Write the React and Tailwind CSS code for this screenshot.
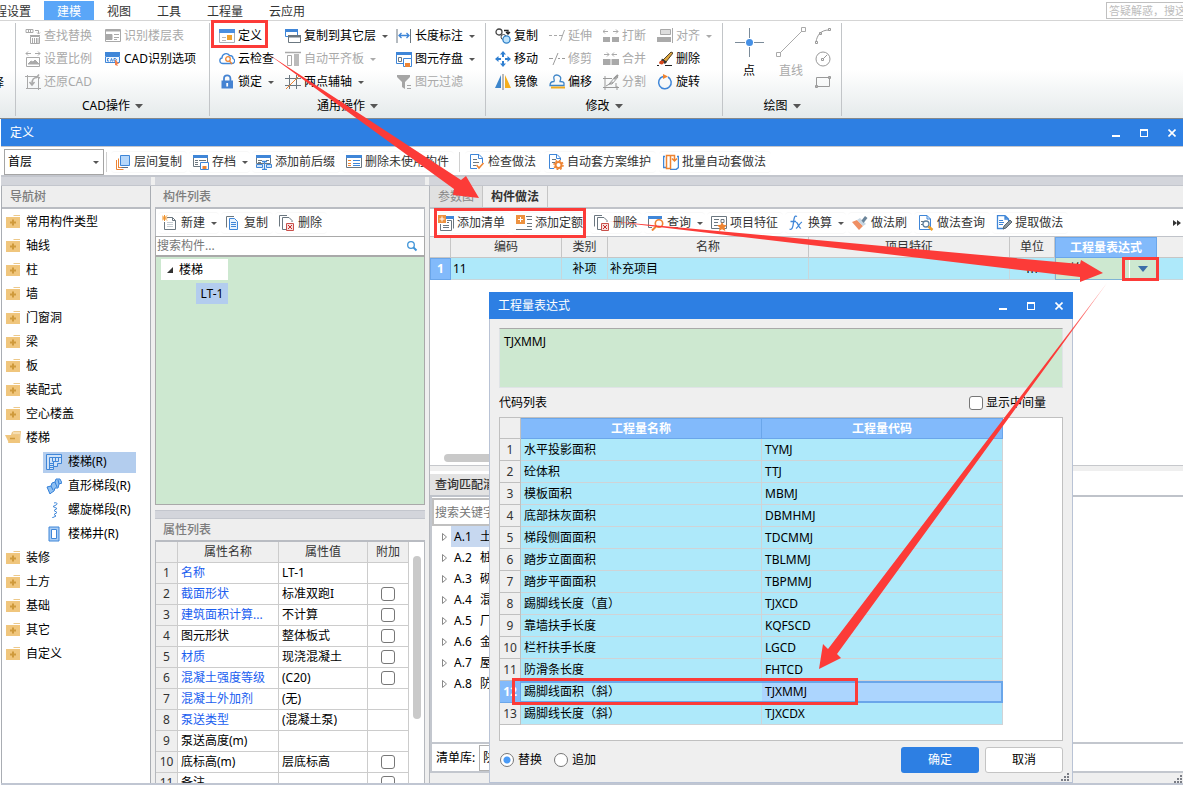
import React from "react";

const G = "#a9a9a9";
const B = "#3f86d8";
const D = "#6b7780";
const O = "#ee8432";

const drawings = {
  findReplace: (
    <g fill="none" stroke={G}>
      <path d="M1 1.5h7v3H1zM3.500 1.500v3M5.500 1.500v3M10 2.500h3.500v3M12 4.500l1.500 1.500 1.500-1.500" />
      <path d="M5.500 8.500h9v7h-9zM5 7.500h10M7.500 10v5M9.500 10v5M11.500 10v5M13 10v5" />
    </g>
  ),
  scale: (
    <g fill="none" stroke={G}>
      <path d="M1 2.500h5M3 .5l-2 2 2 2M10 2.500h5M13 .5l2 2-2 2M1.500 6.500h13v9h-13z" />
      <path d="M3 13l3-3 2 1 2-2 4 4z" fill={G} />
    </g>
  ),
  restore: (
    <g fill="none" stroke={G}>
      <path d="M2.500 1v14M0 2.500h12M13.500 4v12M1 14.500h15" />
      <path d="M12 3.500c-4 0-5 2-5 6M4.500 8l2.500 3 2.500-3M14 .5l-2 2.500 3 1" strokeWidth="1.500" />
    </g>
  ),
  floorTable: (
    <g fill="none" stroke={G}>
      <path d="M.5 1.500h15v12H.5z" />
      <path d="M1 2.500h14" strokeWidth="2" />
      <path d="M0 6.500h7v5H0z" fill={G} />
      <path d="M9 6.500h5M9 9.500h5M9 11.500h3" />
    </g>
  ),
  cadOption: (
    <g>
      <path d="M0 1h15v4H0z" fill={B} />
      <path d="M.5 5.500h14v6H.5z" fill="#edf5fe" stroke={B} />
      <path d="M4 7.500H2.500v2.500H4M5.500 10.500l1-3 1 3M9 7.500v2.500h1.500l1-1.500-1-1z" fill="none" stroke={B} />
      <path d="M10 8l4 5-2 0 1 2-3-1z" fill="#ef7f4d" />
    </g>
  ),
  define: (
    <g>
      <path d="M.5 4.500h15v10H.5z" fill="#fff" stroke="#a8b0b8" />
      <path d="M0 1h16v4H0z" fill="#4a8fe0" />
      <path d="M8 7h5v5H8z" fill="#f0a22c" />
      <path d="M3 9.500h4M3 12.500h4" stroke="#b9b9b9" />
    </g>
  ),
  cloud: (
    <g fill="none" strokeWidth="1.300">
      <path d="M4 12.500c-4 0-4-5-1-5.500 0-4 5-6 7.500-2.500 3 0 3.500 1.500 3.500 3 3 1.500 1.500 5-1 5z" stroke={B} />
      <circle cx="9" cy="8" r="2.300" stroke={O} />
      <path d="M10.500 10l2.500 3" stroke={O} />
    </g>
  ),
  lock: (
    <g>
      <path d="M5 7V4.500a3.200 3.200 0 016.400 0V7" fill="none" stroke="#4583d2" strokeWidth="1.800" />
      <path d="M2.500 6.500H14v8H2.500z" fill="#4583d2" />
      <path d="M8.200 9v3.500" stroke="#fff" strokeWidth="1.800" />
    </g>
  ),
  copyLayer: (
    <g>
      <path d="M.5 1.500h12v7H.5z" fill="#fff" stroke={B} />
      <path d="M0 1h13v3H0z" fill={B} />
      <path d="M3.500 7.500h12v7h-12z" fill="#fff" stroke={D} />
      <path d="M3 7h13v2.500H3z" fill={D} />
    </g>
  ),
  alignSlab: (
    <g>
      <path d="M0 1.500h16" stroke={G} strokeWidth="1.500" />
      <path d="M2.500 4.500h4v10h-4z" fill="none" stroke={G} />
      <path d="M9 3h5v12H9z" fill="#bbb" />
    </g>
  ),
  axis: (
    <g fill="none">
      <path d="M4.500 1v14M11.500 1v14M0 4.500h16M0 11.500h16" stroke={D} />
      <path d="M1 15L15 1" stroke={O} />
    </g>
  ),
  dimension: (
    <g fill="none">
      <path d="M1 1v14M14.500 1v14" stroke={D} />
      <path d="M3 7.500h10M5.500 5L3 7.500 5.500 10M10.500 5L13 7.500 10.500 10" stroke={B} strokeWidth="1.300" />
    </g>
  ),
  saveElement: (
    <g>
      <path d="M.5 1.500h15v11H.5z" fill="#fff" stroke={B} />
      <path d="M0 1h16v3H0z" fill={B} />
      <path d="M2.500 6.500h3v4h-3z" fill="none" stroke={D} />
      <path d="M7.500 7.500h8v8h-8z" fill="#fff" stroke={B} />
      <path d="M9 12h5v4H9z" fill={O} />
    </g>
  ),
  filter: (
    <g fill="#a5a5a5">
      <path d="M1 1h13v2L9 8v7l-3-2V8L1 3z" />
      <path d="M11 11h4v1h-4zM11 14h4v1h-4z" />
    </g>
  ),
  copyObj: (
    <g fill="none">
      <circle cx="4" cy="4" r="3" stroke="#444" strokeWidth="1.300" />
      <path d="M9 2.500h4v3M11 4l2 2 2-2" stroke="#222" strokeWidth="1.300" />
      <circle cx="8.500" cy="9" r="2.500" stroke="#444" />
      <circle cx="11.500" cy="11.500" r="3.600" fill="#bfe3fb" stroke="#2f80c8" strokeWidth="1.300" />
    </g>
  ),
  move: (
    <g fill="#2f7fd1">
      <path d="M8 0l3 3.500H9V6H7V3.500H5zM8 16l3-3.500H9V10H7v2.500H5zM0 8l3.500-3v2H6v2H3.500v2zM16 8l-3.500-3v2H10v2h2.500v2z" />
    </g>
  ),
  mirror: (
    <g>
      <path d="M6 1v13H0z" fill="#3d86cc" />
      <path d="M10 1v13h6z" fill="#f5ae1b" />
      <path d="M8 0v16" stroke="#777" />
    </g>
  ),
  extend: <path d="M0 7.500h3M5 7.500h3M10 7.500h3M11.500 13l4-11" stroke={G} fill="none" />,
  trim: <path d="M0 7.500h4M9 7.500h2M13 7.500h3M4 14l5-12" stroke="#9b9b9b" fill="none" />,
  offset: (
    <g fill="none" strokeWidth="1.300">
      <path d="M1 11.500h14V9.500c0-2-2-2-4-2 0-2 2-3 0-5s-5-2-6 0 1 3 0 5c-3 0-4 1-4 4z" stroke="#3f86c8" />
      <path d="M2 13.500h14" stroke="#f0ab20" strokeWidth="2" />
    </g>
  ),
  breakUp: (
    <g fill={G}>
      <path d="M0 9h7v5H0zM9 9h7v5H9z" />
      <path d="M0 3.500h5M2 1.500l-2 2 2 2M10 3.500h5M13 1.500l2 2-2 2" stroke={G} fill="none" />
    </g>
  ),
  merge: (
    <g fill={G}>
      <path d="M0 8h7.500v6H0zM8.500 8H16v6H8.500z" />
      <path d="M1 3.500h5M4 1.500l2 2-2 2M9 3.500h5M11 1.500l-2 2 2 2" stroke={G} fill="none" />
    </g>
  ),
  split: (
    <g fill="none" stroke="#999">
      <path d="M0 4.500h9M13 9v4M2 2v14M14 12v4M0 13.500h16M3 12l7-4" />
      <path d="M6 10l7-8 2 1-6 7z" />
      <path d="M11 5l4-4" strokeWidth="2" />
    </g>
  ),
  align: (
    <g>
      <path d="M3.500 1.500h10v5h-10z" fill="#ddd" stroke={G} />
      <path d="M0 9h14v5H0z" fill="#aaa" />
      <path d="M15.500 0v15" stroke={G} />
    </g>
  ),
  erase: (
    <g>
      <path d="M6 9l8-8 2 1-7 9z" fill="#dba63f" stroke="#53412a" />
      <path d="M5 7.500l5 3.500-2 2-4-3z" fill="#333" />
      <path d="M2 12c1-3 3-3 5-1.500 0 3-3 4-5 1.500z" fill="#d5481c" />
      <path d="M0 14.500h2M8 14.500h7" stroke="#222" />
    </g>
  ),
  rotate: (
    <g fill="none">
      <path d="M6 2.500a6.300 6.300 0 105 .5" stroke="#3f86d8" strokeWidth="1.500" />
      <path d="M6 0l5 2.500-5 2.500z" fill={O} />
    </g>
  ),
  layers: (
    <g fill="none">
      <path d="M5.500 1.500h9v10h-9z" fill="#b6d7fa" stroke={B} />
      <path d="M3.500 5v8.500H13" stroke="#5f6f86" />
      <path d="M1.500 6v9.500h7M3.500 4.500v9h3" stroke={O} />
    </g>
  ),
  archive: (
    <g>
      <path d="M.5 1.500h14v11H.5z" fill="#fff" stroke={D} />
      <path d="M0 1h15v3H0z" fill={B} />
      <path d="M2 6.500h3M6 6.500h7M2 8.500h3M2 10.500h3" stroke={D} />
      <path d="M7.500 8.500h8v7h-8z" fill="#fff" stroke={B} />
      <path d="M9.500 12h4v3h-4z" fill={O} />
    </g>
  ),
  affix: (
    <g>
      <path d="M.5 1.500h14v8H.5z" fill="#fff" stroke={D} />
      <path d="M0 1h15v3H0z" fill={B} />
      <path d="M2 6.500h4M2 8.500h3M10 6.500h3" stroke={D} />
      <path d="M.5 10.500h6v3h-6zM10.500 10.500h5v3h-5z" fill="#cfe3fa" stroke={B} />
      <path d="M6 7.500h5M8.500 7.500v7.500M6 15.500h5" stroke={B} strokeWidth="1.300" />
    </g>
  ),
  listTable: (
    <g>
      <path d="M.5 1.500h15v12H.5z" fill="#fff" stroke={D} />
      <path d="M0 1h16v3H0z" fill={B} />
      <path d="M7 6.500h7M7 9.500h7M7 11.500h7" stroke={B} />
      <path d="M2 6.500h3M2 9.500h3M2 11.500h3" stroke={O} />
    </g>
  ),
  docCheck: (
    <g fill="none">
      <path d="M10 .5H1.500v14H8M10 .5l3.500 3.500v5M9.500 1v3.500h4" stroke={B} />
      <path d="M4 5.500h4M4 8.500h6M4 11.500h3" stroke={D} />
      <path d="M7.500 11l2.500 3 4.500-5" stroke={O} strokeWidth="1.500" />
    </g>
  ),
  docGear: (
    <g fill="none">
      <path d="M9 .5H1.500v14H6M9 .5l3.500 3.500v2M8.500 1v3.500h4" stroke={B} />
      <path d="M4 5.500h4M4 8.500h3" stroke={D} />
      <circle cx="10.500" cy="11" r="3" stroke={O} strokeWidth="2" />
      <circle cx="10.500" cy="11" r="4.500" stroke={O} strokeWidth="1.500" strokeDasharray="1.800 1.700" />
    </g>
  ),
  batch: (
    <g fill="none">
      <path d="M2 2.500H.5v11H4M7 15.500h6l2.500-2v-11H14" stroke={B} strokeWidth="1.500" />
      <path d="M3.500 1.500h4v13h-4zM8 1.500h3.500V6M9 4.500l2.500 2.500L14 4.500" stroke={O} strokeWidth="1.500" />
    </g>
  ),
  newDoc: (
    <g fill="none">
      <path d="M5 2.500h5.500l3 3v9h-11V7M10.500 2.500v3h3" stroke={D} />
      <path d="M5 7.500h6M5 9.500h6M5 11.500h6" stroke="#c5ccd2" />
      <path d="M0 .5l5 5M5 .5l-5 5M2.500 0v6M0 3h5.500" stroke="#f0932b" />
    </g>
  ),
  copyDoc: (
    <g fill="none">
      <path d="M9 1.500H1.500v11" stroke={D} />
      <path d="M4.500 3.500h5l3 3v8h-8z" fill="#e9f3fe" stroke={B} />
      <path d="M6 7.500h5M6 9.500h5M6 11.500h5" stroke={B} />
    </g>
  ),
  deleteDoc: (
    <g fill="none">
      <path d="M8 .5H.5v11M7 14.500H3.500v-12H10l3 3V7" stroke={D} />
      <path d="M7.500 8.500h7v7h-7z" fill="#f6dedd" stroke="#c9504b" />
      <path d="M9 10l4 4M13 10l-4 4" stroke="#c9302c" />
    </g>
  ),
  addList: (
    <g>
      <path d="M8.500 1.500h7v12" fill="none" stroke={D} />
      <path d="M8 1h8v3H8z" fill={B} />
      <path d="M2.500 9v6.500h11v-10H9" fill="#fff" stroke={D} />
      <path d="M5 10.500h6M5 12.500h6M9 7.500h2" stroke={D} />
      <path d="M0 0h8v8H0z" fill="#ed9240" />
      <path d="M4 1.500v5M1.500 4h5" stroke="#fff" />
    </g>
  ),
  addQuota: (
    <g>
      <path d="M10 1.500h6M11 4.500h5M11 8.500h5M11 11.500h5M0 14.500h16" stroke={D} />
      <path d="M0 0h9v9H0z" fill="#ed9240" />
      <path d="M4.500 2v5M2 4.500h5" stroke="#fff" />
    </g>
  ),
  query: (
    <g fill="none">
      <path d="M4 12.500H.5v-11h13V4" stroke={D} />
      <path d="M0 1h14v3H0z" fill={B} />
      <circle cx="11" cy="8.500" r="3.700" stroke={O} strokeWidth="1.600" />
      <path d="M8.500 11L4 15.500" stroke={O} strokeWidth="2" />
    </g>
  ),
  feature: (
    <g fill="none">
      <path d="M.5 1.500h15v12H.5z" stroke={D} />
      <path d="M3 4.500h5M3 7.500h4M3 10.500h4M10 4.500h3v3h-3z" stroke={D} />
      <path d="M11 7l1.500 2.800 3.500.4-2.500 2.300.8 3.500-3.300-1.800L8 16l.600-3.500L6 10.200l3.600-.4z" fill={O} />
    </g>
  ),
  fx: (
    <g fill="none" stroke={B} strokeWidth="1.300">
      <path d="M8 1.500C5.500 0 5 3 4.500 7.500S3 15.500.5 14M1.500 6.500H7" />
      <path d="M7 7.500c2-1 2.500 6.500 5 5.500M13 7c-2.500 1-3.500 5-6 6.500" />
    </g>
  ),
  brush: (
    <g>
      <path d="M0 7l5-2 6 6-4 4z" fill="#ef8f63" />
      <path d="M5 5l3-2 6 6-3 2z" fill="#c7d6e2" />
      <path d="M9.500 5.500L13 1l2.500 2-4 5z" fill="#6b8499" />
    </g>
  ),
  docSearch: (
    <g fill="none">
      <path d="M9 .5H1.500v14H12.500V4zM9 .5V4h3.500" stroke={B} />
      <path d="M3 6.500h4M3 9.500h2" stroke={D} />
      <circle cx="8" cy="9" r="3" stroke="#5e7f9c" strokeWidth="1.300" />
      <path d="M10.500 11.500l4 3.500" stroke="#f0a22c" strokeWidth="2.500" />
    </g>
  ),
  docPen: (
    <g fill="none">
      <path d="M9 .5H1.500v13H8M9 .5l3.500 3.500v2M9 .5V4h3.500" stroke={B} strokeWidth="1.300" />
      <path d="M3 5.500h4M3 7.500h5M3 9.500h4" stroke={B} />
      <path d="M7 14l1-3 6-6 2 2-6 6z" fill="#8b979f" stroke="#596771" />
    </g>
  ),
  stair: (
    <g fill="none" stroke={B}>
      <path d="M.5.5h15v9h-4v3h-4v3h-7z" fill="#cfe2f8" />
      <path d="M3.500 3.500v12M3.500 3.500h12M6.500 3.500v4M9.500 3.500v4M12.500 3.500v4M6.500 7.500h6M3.500 9.500h4M3.500 11.500h4M3.500 13.500h4M7.500 7.500v5" />
    </g>
  ),
  straightStair: (
    <g fill="#8fc0f2" stroke="#3480d8">
      <path d="M1 9l4-1 1-3 3-1 1-3 4 0 2 4-3 1-1 4-3 0-1 3-3 2-1 1z" />
      <path d="M5 8l2 4M9 4l2 5M12 2l1 4" fill="none" />
    </g>
  ),
  spiral: (
    <path d="M8 1c3-1 4 1 2 2L7 4.500l4 2-3 2 3 2-3 2 2 1.500-4 2" fill="none" stroke={B} />
  ),
  well: (
    <g>
      <path d="M3 1h10v14H3z" fill="#a9cdf5" stroke={B} />
      <path d="M5.500 3.500h5v9h-5z" fill="#fff" stroke={B} />
    </g>
  ),
  folder: (
    <g>
      <path d="M8 2l1-1h6v1z" fill="#edc98a" />
      <path d="M1 3h14v11H1z" fill="#f0c67d" />
      <path d="M8 5.500v6M5 8.500h6" stroke="#cf9a3c" strokeWidth="2" />
    </g>
  ),
  folderOpen: (
    <g>
      <path d="M7 2l2-1h7l-1 12H3z" fill="#edc98a" />
      <path d="M0 5h13l2 8H4z" fill="#f0c67d" />
      <path d="M5 8.500h5" stroke="#cf9a3c" strokeWidth="1.500" />
      <path d="M8 3h7" stroke="#fff3d8" />
    </g>
  ),
  search: (
    <g fill="none" stroke="#3f94d8" strokeWidth="1.300">
      <circle cx="7" cy="7" r="3.300" />
      <path d="M9.500 9.500l3 3" strokeWidth="2" />
    </g>
  ),
};

function Icon({ name }) {
  return (
    <svg className="size-4 shrink-0" viewBox="0 0 16 16" aria-hidden="true">
      {drawings[name]}
    </svg>
  );
}

function Caret({ muted }) {
  return (
    <svg className="h-2 w-[9px] shrink-0" viewBox="0 0 9 8" aria-hidden="true">
      <path d="M3 3h6L6 6z" fill={muted ? "#aaa" : "#555"} />
    </svg>
  );
}

function RibbonButton({ icon, label, off, caret }) {
  return (
    <button
      type="button"
      disabled={off}
      className="flex h-[23px] items-center gap-[3px] whitespace-nowrap text-black disabled:text-[#a9a9a9]"
    >
      <Icon name={icon} />
      {label}
      {caret && <Caret muted={off} />}
    </button>
  );
}

function RibbonGroup({ title, columns, children }) {
  return (
    <section className="my-0.5 flex flex-col border-r border-[#c2c5c8] pl-[9px]">
      <div className={`grid grid-flow-col grid-rows-3 pt-px ${columns}`}>{children}</div>
      <button type="button" className="mr-2 flex flex-1 items-center justify-center gap-0.5 pt-0.5">
        {title}
        <svg className="h-2 w-3" viewBox="0 0 12 8" aria-hidden="true">
          <path d="M3 2h8L7 6.500z" fill="#555" />
        </svg>
      </button>
    </section>
  );
}

function ToolButton({ icon, label, caret }) {
  return (
    <button
      type="button"
      className={`flex h-[22px] shrink-0 items-center gap-[3px] rounded-sm border-y border-[#f8f8f8] pl-1 whitespace-nowrap text-[#333] ${caret ? "pr-0.5" : "pr-[5px]"}`}
    >
      <Icon name={icon} />
      {label}
      {caret && <Caret />}
    </button>
  );
}

function WindowButtons() {
  return (
    <div className="ml-auto flex gap-1.5">
      <button type="button" aria-label="最小化" className="flex h-7 w-[22px] items-center justify-center">
        <svg className="size-2" viewBox="0 0 8 8"><path d="M0 6h8v2H0z" fill="#fff" /></svg>
      </button>
      <button type="button" aria-label="最大化" className="flex h-7 w-[22px] items-center justify-center">
        <svg className="size-2" viewBox="0 0 8 8"><path d="M0 0h8v8H0zM1 2v5h6V2z" fill="#fff" fillRule="evenodd" /></svg>
      </button>
      <button type="button" aria-label="关闭" className="flex h-7 w-[22px] items-center justify-center">
        <svg className="size-2" viewBox="0 0 8 8"><path d="M.5.5l7 7M7.500.5l-7 7" stroke="#fff" strokeWidth="1.600" /></svg>
      </button>
    </div>
  );
}

function Grip() {
  return (
    <svg className="size-2 shrink-0" viewBox="0 0 8 8" aria-hidden="true">
      <path d="M6 0h2v2H6zM3 3h2v2H3zM6 3h2v2H6zM0 6h2v2H0zM3 6h2v2H3zM6 6h2v2H6z" fill="#7a7d85" />
    </svg>
  );
}

function PanelTitle({ children }) {
  return (
    <h2 className="flex h-[23px] shrink-0 items-center border-b-2 border-[#b9bcc2] bg-[#eeeeee] pl-2 font-medium text-[#7d7d7d]">
      {children}
    </h2>
  );
}

function CheckBox(props) {
  return (
    <input
      type="checkbox"
      className="block size-3.5 shrink-0 appearance-none rounded-[3px] border border-[#777] bg-white checked:bg-[#2d7fe3]"
      {...props}
    />
  );
}

const navBefore = ["常用构件类型", "轴线", "柱", "墙", "门窗洞", "梁", "板", "装配式", "空心楼盖"];
const navStairs = [
  ["stair", "楼梯(R)"],
  ["straightStair", "直形梯段(R)"],
  ["spiral", "螺旋梯段(R)"],
  ["well", "楼梯井(R)"],
];
const navAfter = ["装修", "土方", "基础", "其它", "自定义"];

function NavRow({ icon, label }) {
  return (
    <li>
      <button type="button" className="flex h-6 items-center gap-1 pl-[3px]">
        <Icon name={icon} />
        <span className="pl-px">{label}</span>
      </button>
    </li>
  );
}

function NavTree() {
  return (
    <aside className="flex w-[150px] shrink-0 flex-col border-x border-[#a9adb3] bg-white">
      <PanelTitle>导航树</PanelTitle>
      <ul className="min-h-0 flex-1 overflow-hidden pt-px">
        {navBefore.map((n) => <NavRow key={n} icon="folder" label={n} />)}
        <NavRow icon="folderOpen" label="楼梯" />
        {navStairs.map(([icon, label], i) => (
          <li key={label} className="flex h-6 items-center pl-[41px]">
            <button
              type="button"
              className={`flex h-[21px] w-[93px] items-center gap-1.5 pl-[3px] whitespace-nowrap ${i === 0 ? "bg-[#b3cdee]" : ""}`}
            >
              <Icon name={icon} />
              {label}
            </button>
          </li>
        ))}
        {navAfter.map((n) => <NavRow key={n} icon="folder" label={n} />)}
      </ul>
    </aside>
  );
}

const props = [
  ["名称", "LT-1", 1, 0],
  ["截面形状", "标准双跑I", 1, 1],
  ["建筑面积计算...", "不计算", 1, 1],
  ["图元形状", "整体板式", 0, 1],
  ["材质", "现浇混凝土", 1, 1],
  ["混凝土强度等级", "(C20)", 1, 1],
  ["混凝土外加剂", "(无)", 1, 0],
  ["泵送类型", "(混凝土泵)", 1, 0],
  ["泵送高度(m)", "", 0, 0],
  ["底标高(m)", "层底标高", 0, 1],
  ["备注", "", 0, 1],
];

function PropertyTable() {
  return (
    <div className="flex min-h-0 flex-1 overflow-hidden border-x border-[#b5b8bd] bg-white">
      <table className="w-[253px] table-fixed border-separate border-spacing-0 self-start">
        <colgroup>
          <col className="w-[22px]" />
          <col className="w-[101px]" />
          <col className="w-[89px]" />
          <col className="w-[41px]" />
        </colgroup>
        <thead>
          <tr className="h-[21px] bg-[#efefef] text-[#333]">
            <th className="border-r border-b border-[#ccc]" aria-label="序号" />
            <th className="border-r border-b border-[#ccc] font-normal">属性名称</th>
            <th className="border-r border-b border-[#ccc] font-normal">属性值</th>
            <th className="border-r border-b border-[#ccc] font-normal">附加</th>
          </tr>
        </thead>
        <tbody>
          {props.map(([name, value, blue, check], i) => (
            <tr key={name} className="h-[21px]">
              <td className="border-r border-b border-[#ccc] bg-[#efefef] text-center text-[#333]">{i + 1}</td>
              <td className={`truncate border-r border-b border-[#ccc] pl-[3px] ${blue ? "text-[#1a5ef0]" : "text-black"}`}>{name}</td>
              <td className="border-r border-b border-[#ccc] pl-[3px]">{value}</td>
              <td className="border-r border-b border-[#ccc]">
                <div className="flex justify-center">{check ? <CheckBox aria-label={`附加 ${name}`} /> : null}</div>
              </td>
            </tr>
          ))}
        </tbody>
      </table>
      <div className="flex-1 pt-3.5 pl-1">
        <div className="h-[163px] w-2 rounded-full bg-[#c9c9c9]" />
      </div>
    </div>
  );
}

function ComponentPanel() {
  return (
    <div className="flex w-[270px] shrink-0 flex-col">
      <PanelTitle>构件列表</PanelTitle>
      <div className="flex h-[27px] shrink-0 items-center gap-0.5 border-x border-[#b5b8bd] bg-white pl-0.5">
        <ToolButton icon="newDoc" label="新建" caret />
        <ToolButton icon="copyDoc" label="复制" />
        <ToolButton icon="deleteDoc" label="删除" />
      </div>
      <label className="flex h-[21px] shrink-0 items-center border border-b-2 border-[#a9a9a9] bg-white pr-1">
        <input aria-label="搜索构件" placeholder="搜索构件..." className="min-w-0 flex-1 pl-px outline-none placeholder:text-[#777]" />
        <Icon name="search" />
      </label>
      <div className="h-[248px] shrink-0 border border-t-0 border-[#a9a9a9] bg-[#cde8d0] pt-0.5 pl-[5px]">
        <button type="button" className="flex h-[21px] w-[67px] items-center gap-1.5 bg-white pl-1.5">
          <svg className="size-1.5" viewBox="0 0 6 6"><path d="M6 0v6H0z" fill="#333" /></svg>
          楼梯
        </button>
        <button type="button" className="mt-[3px] ml-[35px] block h-[21px] w-8 bg-[#b3cdee]">LT-1</button>
      </div>
      <div className="mt-[5px] h-[9px] shrink-0 border-y border-[#c3c6cd] bg-[#d3d5db]" />
      <PanelTitle>属性列表</PanelTitle>
      <PropertyTable />
    </div>
  );
}

function WorkTable() {
  const head = "border-r border-b border-[#c6c6c6] font-normal";
  const cell = "border-r border-b border-[#c9d6da] bg-[#aee9fa]";
  return (
    <table className="w-full shrink-0 table-fixed border-separate border-spacing-0">
      <colgroup>
        <col className="w-[21px]" />
        <col className="w-[111px]" />
        <col className="w-[46px]" />
        <col className="w-[201px]" />
        <col className="w-[201px]" />
        <col className="w-[45px]" />
        <col className="w-[102px]" />
        <col />
      </colgroup>
      <thead>
        <tr className="h-[21px] bg-[#efefef] text-[#333]">
          <th className={head} aria-label="序号" />
          <th className={head}>编码</th>
          <th className={head}>类别</th>
          <th className={head}>名称</th>
          <th className={head}>项目特征</th>
          <th className={head}>单位</th>
          <th className="border border-[#6aa6ea] bg-[#82bafb] font-bold text-white">工程量表达式</th>
          <th className="border-b border-[#c6c6c6]" aria-label="其它" />
        </tr>
      </thead>
      <tbody>
        <tr className="h-[22px]">
          <td className="border border-[#6aa6ea] bg-[#82bafb] text-center font-bold text-white">1</td>
          <td className={`${cell} pl-0.5`}>11</td>
          <td className={`${cell} text-center`}>补项</td>
          <td className={`${cell} pl-0.5`}>补充项目</td>
          <td className={cell} />
          <td className={`${cell} text-center`}>m</td>
          <td className="border-x border-b border-[#7fb3d5] bg-[#cde8d0]">
            <div className="flex items-center justify-between pl-0.5">
              原始
              <button type="button" aria-label="选择表达式" className="flex h-5 w-[27px] items-center justify-center border-l border-white">
                <svg className="h-1.5 w-2.5" viewBox="0 0 10 6"><path d="M0 0h10L5 6z" fill="#3a6ea8" /></svg>
              </button>
            </div>
          </td>
          <td className="border-b border-[#c9d6da] bg-[#aee9fa]" />
        </tr>
      </tbody>
    </table>
  );
}

const chapters = ["土", "桩", "砌", "混", "厂", "金", "屋", "防"];

function WorkPanel() {
  return (
    <div className="flex min-w-0 flex-1 flex-col border-l border-[#b5b8bd]">
      <div className="flex h-[23px] shrink-0 border-b-2 border-[#c0c3c9]">
        <button type="button" className="w-[53px] border-r border-[#c5c5c5] bg-[#e1e1e1] text-[#888]">参数图</button>
        <button type="button" className="w-[65px] border-r border-[#c5c5c5] font-bold text-[#333]">构件做法</button>
      </div>
      <div className="flex h-[27px] shrink-0 items-center gap-0.5 overflow-hidden bg-white pl-1">
        <ToolButton icon="addList" label="添加清单" />
        <ToolButton icon="addQuota" label="添加定额" />
        <ToolButton icon="deleteDoc" label="删除" />
        <ToolButton icon="query" label="查询" caret />
        <ToolButton icon="feature" label="项目特征" />
        <ToolButton icon="fx" label="换算" caret />
        <ToolButton icon="brush" label="做法刷" />
        <ToolButton icon="docSearch" label="做法查询" />
        <ToolButton icon="docPen" label="提取做法" />
        <button type="button" aria-label="更多" className="mr-0.5 ml-auto">
          <svg className="h-1.5 w-2" viewBox="0 0 8 6"><path d="M0 0l4 3-4 3zM4 0l4 3-4 3z" fill="#333" /></svg>
        </button>
      </div>
      <div className="h-px shrink-0 bg-[#c0c3c9]" />
      <div className="flex h-[229px] shrink-0 flex-col justify-between border-b border-[#c6c8cc] bg-white">
        <WorkTable />
        <div className="mb-[3px] ml-3.5 h-2 w-[420px] rounded-full bg-[#c9c9c9]" />
      </div>
      <div className="h-[5px] shrink-0" />
      <div className="flex h-[26px] shrink-0 items-end border-b-2 border-[#bfc3ca] bg-white">
        <button type="button" className="h-[21px] w-20 bg-[#e3e3e3] pl-[5px] text-left font-medium whitespace-nowrap text-[#333]">查询匹配清</button>
      </div>
      <div className="flex min-h-0 flex-1 flex-col border-l-2 border-[#c3c7ce] bg-white pt-px">
        <input
          aria-label="搜索关键字"
          placeholder="搜索关键字"
          className="h-7 w-[200px] shrink-0 border-2 border-[#c0c0c0] pl-px outline-none placeholder:text-[#777]"
        />
        <ul className="min-h-0 flex-1 overflow-hidden">
          {chapters.map((c, i) => (
            <li key={c} className="flex h-[21px] items-center pl-2.5">
              <svg className="h-2 w-1.5" viewBox="0 0 6 8"><path d="M.5.5v7l4-3.500z" fill="#fff" stroke="#888" /></svg>
              <span className={`ml-[3px] flex h-[21px] w-[150px] items-center gap-2 pl-[3px] ${i === 0 ? "bg-[#c7d8f0]" : ""}`}>
                <span className="w-[18px]">A.{i + 1}</span>
                {c}
              </span>
            </li>
          ))}
        </ul>
      </div>
      <div className="flex h-[31px] shrink-0 items-center gap-1 border-y-2 border-l-2 border-[#c3c7ce] bg-white pl-1">
        <label htmlFor="library">清单库:</label>
        <select id="library" className="h-[26px] w-[150px] appearance-none border border-[#b0b0b0] pl-[3px]">
          <option>陕</option>
        </select>
      </div>
      <div className="flex h-2.5 shrink-0 items-end justify-end pr-px">
        <Grip />
      </div>
    </div>
  );
}

const codes = [
  ["水平投影面积", "TYMJ"],
  ["砼体积", "TTJ"],
  ["模板面积", "MBMJ"],
  ["底部抹灰面积", "DBMHMJ"],
  ["梯段侧面面积", "TDCMMJ"],
  ["踏步立面面积", "TBLMMJ"],
  ["踏步平面面积", "TBPMMJ"],
  ["踢脚线长度（直）", "TJXCD"],
  ["靠墙扶手长度", "KQFSCD"],
  ["栏杆扶手长度", "LGCD"],
  ["防滑条长度", "FHTCD"],
  ["踢脚线面积（斜）", "TJXMMJ"],
  ["踢脚线长度（斜）", "TJXCDX"],
];

function ExpressionDialog() {
  const radio =
    "size-3.5 appearance-none rounded-full border border-[#777] bg-white checked:bg-[radial-gradient(circle,#4a9af5_3px,white_4px)]";
  return (
    <div role="dialog" aria-label="工程量表达式" className="absolute top-[292px] left-[489px] w-[584px] bg-[#efefef]">
      <header className="flex h-[27px] items-center bg-[#2d7fe3] pr-[3px] pl-[9px] text-white">
        <span>工程量表达式</span>
        <WindowButtons />
      </header>
      <div className="border border-t-0 border-[#b9c3d5] px-[9px] pt-[9px] pb-px">
        <textarea
          aria-label="表达式"
          defaultValue="TJXMMJ"
          className="block h-[60px] w-full resize-none border border-[#dfe3e6] border-t-[#a9a9a9] bg-[#cde8d0] px-1 py-[5px] outline-none"
        />
        <div className="flex h-[29px] items-center justify-between pr-[17px]">
          <span>代码列表</span>
          <label className="flex items-center gap-[3px]">
            <CheckBox />
            显示中间量
          </label>
        </div>
        <div className="h-[324px] border border-[#c0c0c0] bg-white">
          <table className="w-[503px] table-fixed border-separate border-spacing-0">
            <colgroup>
              <col className="w-[21px]" />
              <col className="w-[241px]" />
              <col className="w-[241px]" />
            </colgroup>
            <thead>
              <tr className="h-[21px] text-white">
                <th className="border-r border-b border-[#c0c0c0] bg-[#efefef]" aria-label="序号" />
                <th className="border-y border-r border-[#6aa6ea] bg-[#82bafb] font-bold">工程量名称</th>
                <th className="border-y border-r border-[#6aa6ea] bg-[#82bafb] font-bold">工程量代码</th>
              </tr>
            </thead>
            <tbody>
              {codes.map(([name, code], i) => {
                const sel = i === 11;
                return (
                  <tr key={code} className="h-[22px]">
                    <td className={`border-r border-b text-center ${sel ? "border-[#6aa6ea] bg-[#82bafb] font-bold text-white" : "border-[#c0c0c0] bg-[#efefef] text-[#333]"}`}>{i + 1}</td>
                    <td className={`bg-[#aee9fa] pl-[3px] ${sel ? "border-y-2 border-[#6aa6ea]" : "border-r border-b border-[#d0d3d6]"}`}>{name}</td>
                    <td className={`pl-[3px] ${sel ? "border-y-2 border-r-2 border-[#6aa6ea] bg-[#acd5fe]" : "border-r border-b border-[#d0d3d6] bg-[#aee9fa]"}`}>{code}</td>
                  </tr>
                );
              })}
            </tbody>
          </table>
        </div>
        <div className="mt-1.5 flex h-[26px] items-center gap-1.5">
          <label className="flex items-center gap-1 pl-px">
            <input type="radio" name="mode" defaultChecked className={radio} />
            替换
          </label>
          <label className="mr-auto flex items-center gap-1 pl-1.5">
            <input type="radio" name="mode" className={radio} />
            追加
          </label>
          <button type="button" className="h-[26px] w-[78px] rounded-[3px] bg-[#2d7fe3] text-white">确定</button>
          <button type="button" className="h-[26px] w-[78px] rounded-[3px] border border-[#c4c4c4] bg-white">取消</button>
        </div>
        <div className="-mr-1.5 flex h-2 items-start justify-end">
          <Grip />
        </div>
      </div>
    </div>
  );
}

function Annotations() {
  return (
    <svg className="pointer-events-none absolute top-0 left-0 h-[785px] w-[1183px]" viewBox="0 0 1183 785" aria-hidden="true">
      <defs>
        <linearGradient id="fade" gradientUnits="userSpaceOnUse" x1="1107" y1="283" x2="1060" y2="346">
          <stop offset="0" stopColor="#fc3b38" stopOpacity=".5" />
          <stop offset="1" stopColor="#fc3b38" />
        </linearGradient>
      </defs>
      <g fill="none" stroke="#fc3b38" strokeWidth="3">
        <path d="M212.500 21.500h54v25h-54zM435.500 209.500h149v27h-149zM1123.500 258.500h34v21h-34zM513.500 679.500h343v24h-343z" />
      </g>
      <g fill="#fc3b38">
        <path d="M268 54l193 126 5-4 13 22-26-3 1-6z" />
        <path d="M608 221l472 43 1-4 22 13-23 9v-5z" />
        <path d="M1107 283L837 654l4 4-22 11 4-25 5 5z" fill="url(#fade)" />
      </g>
    </svg>
  );
}

export default function App() {
  return (
    <div className="relative flex h-screen min-h-[785px] flex-col overflow-hidden bg-white font-['Noto_Sans','Noto_Sans_CJK_SC',sans-serif] text-xs text-black">
      <header className="flex h-[21px] shrink-0 items-end overflow-hidden border-b border-[#d5d5d5]">
        <nav className="-ml-[30px] flex h-[19px] text-[#333]">
          <button type="button" className="px-[13px] pt-0.5">工程设置</button>
          <button type="button" className="bg-[#5aa6f8] px-[13px] pt-0.5 text-white">建模</button>
          <button type="button" className="px-[13px] pt-0.5">视图</button>
          <button type="button" className="px-[13px] pt-0.5">工具</button>
          <button type="button" className="px-[13px] pt-0.5">工程量</button>
          <button type="button" className="px-[13px] pt-0.5">云应用</button>
        </nav>
        <input
          aria-label="答疑解惑"
          placeholder="答疑解惑，搜这里"
          className="mb-px ml-auto h-[17px] w-[77px] border border-r-0 border-[#c0c0c0] pl-0.5 text-[11px] outline-none placeholder:text-[#bcbcbc]"
        />
      </header>

      <div className="flex h-[98px] shrink-0 overflow-hidden border-b border-[#84898d] bg-linear-to-b from-white from-50% to-[#e5eaeb]">
        <div className="my-0.5 flex w-4 items-center justify-start overflow-hidden border-r border-[#c2c5c8] pt-[26px]">
          <button type="button" className="-ml-2">择</button>
        </div>
        <RibbonGroup title="CAD操作" columns="grid-cols-[80px_104px]">
          <RibbonButton icon="findReplace" label="查找替换" off />
          <RibbonButton icon="scale" label="设置比例" off />
          <RibbonButton icon="restore" label="还原CAD" off />
          <RibbonButton icon="floorTable" label="识别楼层表" off />
          <RibbonButton icon="cadOption" label="CAD识别选项" />
        </RibbonGroup>
        <RibbonGroup title="通用操作" columns="grid-cols-[66px_111px_89px]">
          <RibbonButton icon="define" label="定义" />
          <RibbonButton icon="cloud" label="云检查" />
          <RibbonButton icon="lock" label="锁定" caret />
          <RibbonButton icon="copyLayer" label="复制到其它层" caret />
          <RibbonButton icon="alignSlab" label="自动平齐板" off caret />
          <RibbonButton icon="axis" label="两点辅轴" caret />
          <RibbonButton icon="dimension" label="长度标注" caret />
          <RibbonButton icon="saveElement" label="图元存盘" caret />
          <RibbonButton icon="filter" label="图元过滤" off />
        </RibbonGroup>
        <RibbonGroup title="修改" columns="grid-cols-[54px_54px_54px_65px]">
          <RibbonButton icon="copyObj" label="复制" />
          <RibbonButton icon="move" label="移动" />
          <RibbonButton icon="mirror" label="镜像" />
          <RibbonButton icon="extend" label="延伸" off />
          <RibbonButton icon="trim" label="修剪" off />
          <RibbonButton icon="offset" label="偏移" />
          <RibbonButton icon="breakUp" label="打断" off />
          <RibbonButton icon="merge" label="合并" off />
          <RibbonButton icon="split" label="分割" off />
          <RibbonButton icon="align" label="对齐" off caret />
          <RibbonButton icon="erase" label="删除" />
          <RibbonButton icon="rotate" label="旋转" />
        </RibbonGroup>
        <RibbonGroup title="绘图" columns="grid-cols-[42px_41px_26px]">
          <button type="button" className="row-span-3 flex h-[69px] w-[34px] flex-col items-center gap-1.5 pt-[3px]">
            <svg className="size-[30px]" viewBox="0 0 30 30">
              <path d="M15.500 1v10M15.500 20v10M1 15.500h10M20 15.500h10" stroke="#7b8b99" />
              <circle cx="15.500" cy="15.500" r="3.500" fill="#4590e6" />
            </svg>
            点
          </button>
          <button type="button" disabled className="row-span-3 flex h-[69px] w-[34px] flex-col items-center gap-1.5 pt-[3px] text-[#a9a9a9]">
            <svg className="size-[30px]" viewBox="0 0 30 30" fill="none" stroke="#aaa">
              <path d="M4 26L26 4M.5 25.500h4v4h-4zM25.500.5h4v4h-4z" />
            </svg>
            直线
          </button>
          <button type="button" aria-label="弧" className="flex h-[23px] items-center">
            <svg className="size-4" viewBox="0 0 16 16" fill="none" stroke="#999">
              <path d="M1 14C2 7 6 2 14 2M.5 13.500h2v2h-2zM4.500 4.500h2v2h-2zM13.500.5h2v2h-2z" />
            </svg>
          </button>
          <button type="button" aria-label="圆" className="flex h-[23px] items-center">
            <svg className="size-4" viewBox="0 0 16 16" fill="none" stroke="#999">
              <circle cx="8" cy="8" r="7" />
              <path d="M6.500 7.500h2v2h-2zM8.500 7.500L12 4" />
            </svg>
          </button>
          <button type="button" aria-label="矩形" className="flex h-[23px] items-center">
            <svg className="size-4" viewBox="0 0 16 16" fill="none" stroke="#999">
              <path d="M1.500 3.500h13v9h-13zM.5 11.500h2v2h-2zM13.500 2.500h2v2h-2z" />
            </svg>
          </button>
        </RibbonGroup>
      </div>

      <main className="ml-px flex min-h-0 flex-1 flex-col border-b-2 border-[#c0c6d2] bg-[#efefef]">
        <header className="flex h-[27px] shrink-0 items-center bg-[#2d7fe3] pl-[9px] text-white">
          <h1>定义</h1>
          <WindowButtons />
        </header>
        <div className="flex h-[31px] shrink-0 items-center border-t border-b-2 border-[#c3c6cd] bg-white pt-px">
          <div className="relative ml-[3px] flex items-center">
            <select aria-label="楼层" className="h-[26px] w-[100px] appearance-none border border-[#a5a5a5] bg-white pl-[3px]">
              <option>首层</option>
            </select>
            <span className="pointer-events-none absolute right-[5px]"><Caret /></span>
          </div>
          <div className="mr-1 ml-0.5 h-5 w-px bg-[#d0d0d0]" />
          <div className="flex items-center gap-0.5">
            <ToolButton icon="layers" label="层间复制" />
            <ToolButton icon="archive" label="存档" caret />
            <ToolButton icon="affix" label="添加前后缀" />
            <ToolButton icon="listTable" label="删除未使用构件" />
          </div>
          <div className="mx-[5px] h-5 w-px bg-[#d0d0d0]" />
          <div className="flex items-center gap-[3px]">
            <ToolButton icon="docCheck" label="检查做法" />
            <ToolButton icon="docGear" label="自动套方案维护" />
            <ToolButton icon="batch" label="批量自动套做法" />
          </div>
        </div>
        <div className="grid h-[9px] shrink-0 grid-cols-[150px_270px_1fr] gap-1 border-b border-[#c3c6cd]">
          <div className="bg-[#d3d5db]" />
          <div className="bg-[#d3d5db]" />
          <div className="bg-[#d3d5db]" />
        </div>
        <div className="flex min-h-0 flex-1 gap-1">
          <NavTree />
          <ComponentPanel />
          <WorkPanel />
        </div>
      </main>

      <ExpressionDialog />
      <Annotations />
    </div>
  );
}
